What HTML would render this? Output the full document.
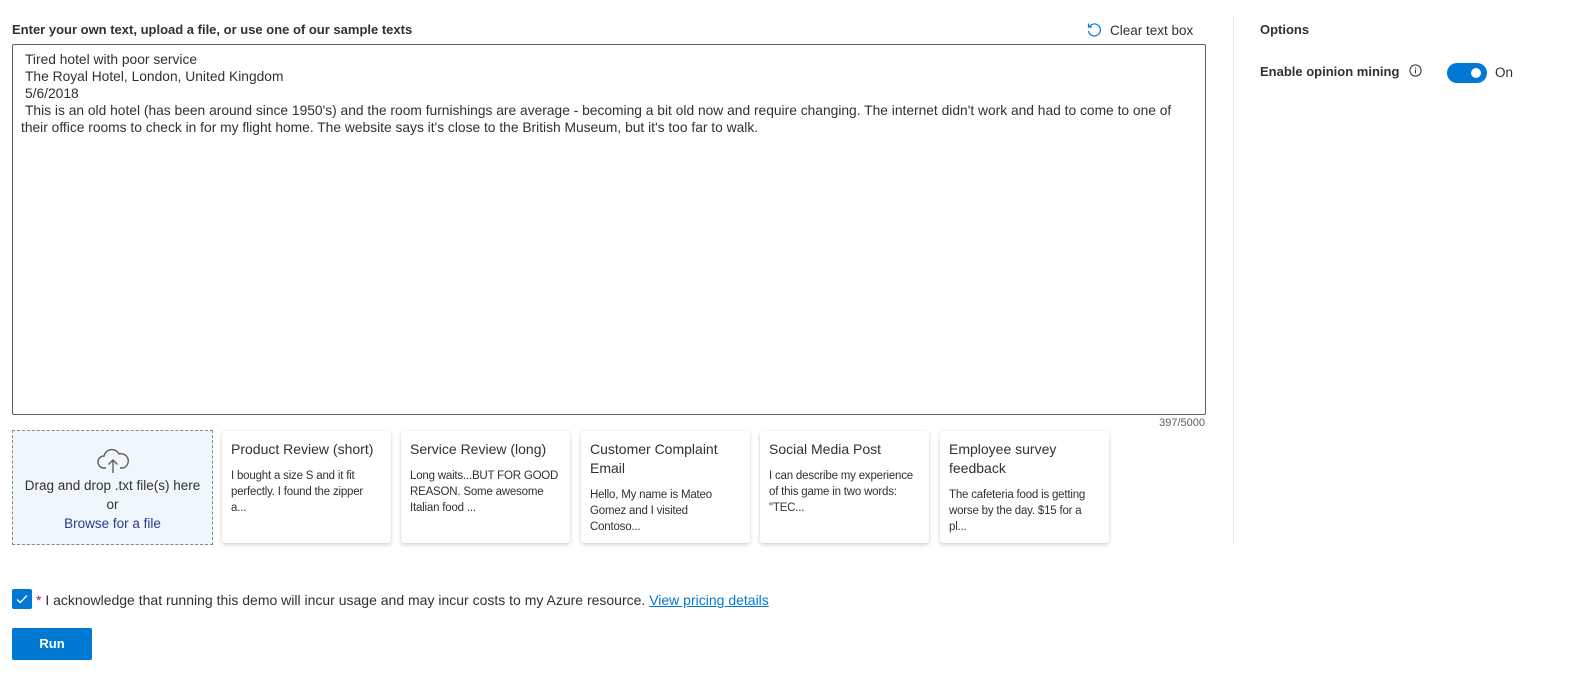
<!DOCTYPE html>
<html><head><style>
body{margin:0;width:1573px;height:681px;background:#fff;font-family:"Liberation Sans",sans-serif;color:#323130;position:relative;overflow:hidden}
.a{position:absolute}
.lbl{font-size:13px;font-weight:bold;color:#323130}
.ta{left:12px;top:44px;width:1194px;height:371px;border:1px solid #605e5c;border-radius:2px;box-sizing:border-box}
.txt{left:21px;top:51px;width:1172px;font-size:13.8px;line-height:17px;color:#323130}
.card{width:169px;height:112px;top:431px;background:#fff;border-radius:3px;box-shadow:0 1.6px 4px rgba(0,0,0,.16),0 0 1px rgba(0,0,0,.12);box-sizing:border-box;padding:9px 9px}
.card h4{margin:0 0 9px;font-size:14px;font-weight:normal;line-height:19px;color:#323130}
.card p{margin:0;font-size:11.5px;line-height:16px;color:#323130;letter-spacing:-0.2px}
</style></head><body>
<div class="a lbl" style="left:12px;top:22px">Enter your own text, upload a file, or use one of our sample texts</div>
<div class="a" style="left:1086px;top:22px;font-size:13.5px;color:#323130">
<svg width="16" height="16" viewBox="0 0 16 16" style="vertical-align:-3px;margin-right:8px"><path d="M3.5 4.5A6 6 0 1 1 2.5 9" fill="none" stroke="#0078d4" stroke-width="1.2"/><path d="M2.5 1.5v3.5h3.5" fill="none" stroke="#0078d4" stroke-width="1.2"/></svg>Clear text box</div>
<div class="a ta"></div>
<div class="a txt"><span style="padding-left:4px">Tired hotel with poor service</span><br><span style="padding-left:4px">The Royal Hotel, London, United Kingdom</span><br><span style="padding-left:4px">5/6/2018</span><br><span style="padding-left:4px"></span>This is an old hotel (has been around since 1950's) and the room furnishings are average - becoming a bit old now and require changing. The internet didn't work and had to come to one of their office rooms to check in for my flight home. The website says it's close to the British Museum, but it's too far to walk.</div>
<div class="a" style="left:1140px;top:417px;width:65px;text-align:right;font-size:11px;color:#605e5c">397/5000</div>
<div class="a" style="left:1233px;top:15px;width:1px;height:530px;background:#edebe9"></div>
<div class="a lbl" style="left:1260px;top:22px">Options</div>
<div class="a lbl" style="left:1260px;top:64px">Enable opinion mining <svg width="13" height="13" viewBox="0 0 13 13" style="vertical-align:-1px;margin-left:6px"><circle cx="6.5" cy="6.5" r="5.6" fill="none" stroke="#323130" stroke-width="1"/><path d="M6.5 5.5v4M6.5 3.5v1" stroke="#323130" stroke-width="1"/></svg></div>
<div class="a" style="left:1447px;top:63px;width:40px;height:20px;border-radius:10px;background:#0078d4"><div class="a" style="left:24px;top:5px;width:10px;height:10px;border-radius:5px;background:#fff"></div></div>
<div class="a" style="left:1495px;top:65px;font-size:13.5px">On</div>
<div class="a" style="left:12px;top:430px;width:201px;height:115px;border:1px dashed #8a8886;background:#eff6fc;box-sizing:border-box;text-align:center;font-size:13.5px;line-height:19px">
<svg width="36" height="28" viewBox="0 0 36 28" style="margin-top:16px;display:block;margin-left:auto;margin-right:auto"><path d="M11 21H9a6 6 0 0 1 0-12 8 8 0 0 1 15-2 6 6 0 0 1 4 14h-3" fill="none" stroke="#605e5c" stroke-width="1.4"/><path d="M18 26V13M13.5 17.5L18 13l4.5 4.5" fill="none" stroke="#605e5c" stroke-width="1.4"/></svg>
<div style="margin-top:1px">Drag and drop .txt file(s) here</div><div>or</div><div style="color:#2b3a8c">Browse for a file</div></div>
<div class="a card" style="left:222px"><h4>Product Review (short)</h4><p>I bought a size S and it fit perfectly. I found the zipper<br>a...</p></div>
<div class="a card" style="left:401px"><h4>Service Review (long)</h4><p>Long waits...BUT FOR GOOD REASON. Some awesome Italian food ...</p></div>
<div class="a card" style="left:581px"><h4>Customer Complaint Email</h4><p>Hello, My name is Mateo Gomez and I visited Contoso...</p></div>
<div class="a card" style="left:760px"><h4>Social Media Post</h4><p>I can describe my experience of this game in two words: "TEC...</p></div>
<div class="a card" style="left:940px"><h4>Employee survey feedback</h4><p>The cafeteria food is getting worse by the day. $15 for a pl...</p></div>
<div class="a" style="left:12px;top:589px;width:20px;height:20px;border-radius:2px;background:#0078d4"><svg width="20" height="20" viewBox="0 0 20 20"><path d="M5 10.5l3.2 3L15 6.5" fill="none" stroke="#fff" stroke-width="1.4"/></svg></div>
<div class="a" style="left:36px;top:592px;font-size:14px;color:#323130"><span style="color:#a4262c">*</span> I acknowledge that running this demo will incur usage and may incur costs to my Azure resource. <span style="color:#0078d4;text-decoration:underline">View pricing details</span></div>
<div class="a" style="left:12px;top:628px;width:80px;height:32px;border-radius:2px;background:#0078d4;color:#fff;font-size:13px;font-weight:bold;text-align:center;line-height:32px">Run</div>
</body></html>
